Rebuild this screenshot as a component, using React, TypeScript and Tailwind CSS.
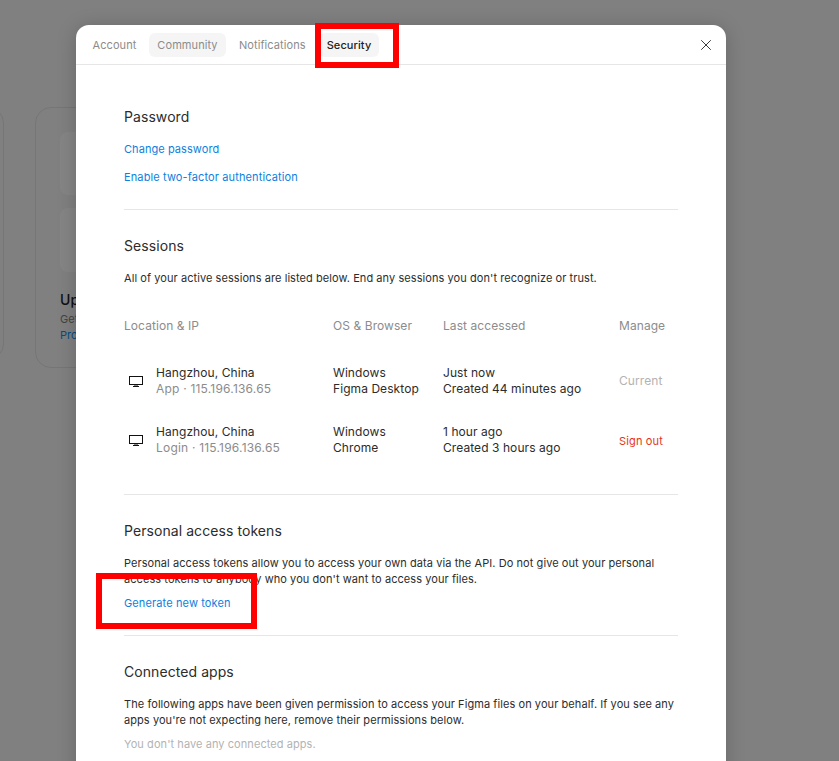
import { X } from "lucide-react"

const SESSIONS = [
    { place: "Hangzhou, China", via: "App · 115.196.136.65", os: "Windows", app: "Figma Desktop", last: "Just now", created: "Created 44 minutes ago", current: true },
    { place: "Hangzhou, China", via: "Login · 115.196.136.65", os: "Windows", app: "Chrome", last: "1 hour ago", created: "Created 3 hours ago", current: false },
]

function Monitor() {
    return (
        <svg width="16" height="14" viewBox="0 0 16 14" fill="none" stroke="#111" strokeWidth="1" className="shrink-0 mt-[2px]">
            <rect x="1.5" y="1.5" width="13" height="8" />
            <path d="M5 11.5h6M7 10v1M9 10v1" />
        </svg>
    )
}

function Background() {
    return (
        <div className="flex gap-[31px] pt-[107px] -ml-[200px]">
            <div className="w-[204px] h-[253px] shrink-0 rounded-2xl border border-[#767676]" />
            <div className="w-[400px] h-[261px] shrink-0 rounded-2xl border border-[#767676] px-6 pt-6">
                <div className="h-[63px] rounded-lg bg-[#858585]" />
                <div className="h-[64px] mt-[13px] rounded-lg bg-[#858585]" />
                <div className="mt-[18px] text-sm leading-5 font-medium text-[#111]">Upgrade</div>
                <div className="mt-px text-[11px] leading-4 text-[#444]">Get more</div>
                <div className="text-[11px] leading-4 text-[#0a4a80]">Professional</div>
            </div>
        </div>
    )
}

function Tab({ label, width, pill, active }: { label: string; width?: string; pill?: boolean; active?: boolean }) {
    return (
        <div className={`h-6 flex items-center justify-center px-2 rounded-md text-[11px] tracking-[0.08px] ${width ?? ""} ${pill ? "bg-[#f5f5f5]" : ""} ${active ? "text-[#222] font-medium" : "text-[#8c8c8c]"}`}>
            {label}
        </div>
    )
}

export default function App() {
    return (
        <div className="relative h-[761px] w-[839px] overflow-hidden bg-[#808080] font-['Inter',sans-serif] text-[#2c2c2c] tracking-[0.07px]">
            <Background />

            <div className="absolute left-[76px] top-[25px] w-[650px] h-[760px] rounded-t-[13px] bg-white shadow-[0_2px_20px_rgba(0,0,0,0.2)]">
                <div className="h-10 flex items-center justify-between pl-[9px] pr-[11px] border-b border-[#e6e6e6]">
                    <div className="flex items-center gap-[5px] pt-px">
                        <Tab label="Account" width="w-[59px]" />
                        <Tab label="Community" width="w-[77px]" pill />
                        <Tab label="Notifications" />
                        <Tab label="Security" pill active />
                    </div>
                    <X size={18} strokeWidth={1.1} className="text-[#111]" />
                </div>

                <div className="px-12">
                    <section className="pt-[42px] pb-6 border-b border-[#e6e6e6]">
                        <h2 className="text-[14px] leading-5">Password</h2>
                        <div className="mt-[14px] text-[11px] leading-4 text-[#0d7fe0]">Change password</div>
                        <div className="mt-3 text-[11px] leading-4 tracking-[0.12px] text-[#0d7fe0]">Enable two-factor authentication</div>
                    </section>

                    <section className="pt-[26px] pb-[38px] border-b border-[#e6e6e6]">
                        <h2 className="text-[14px] leading-5">Sessions</h2>
                        <p className="mt-[14px] text-[11px] leading-4">All of your active sessions are listed below. End any sessions you don't recognize or trust.</p>
                        <div className="mt-[32px] grid grid-cols-[209px_110px_176px_1fr] text-[12px] leading-4 text-[#8c8c8c]">
                            <div>Location &amp; IP</div>
                            <div>OS &amp; Browser</div>
                            <div>Last accessed</div>
                            <div>Manage</div>
                        </div>
                        <div className="mt-[31px] flex flex-col gap-[27px]">
                            {SESSIONS.map((s) => (
                                <div key={s.via} className="grid grid-cols-[209px_110px_176px_1fr] items-center text-[12px] leading-4">
                                    <div className="flex items-center gap-[12px] pl-[4px]">
                                        <Monitor />
                                        <div>
                                            <div>{s.place}</div>
                                            <div className="text-[#8c8c8c] tracking-[0.2px]">{s.via}</div>
                                        </div>
                                    </div>
                                    <div>
                                        <div>{s.os}</div>
                                        <div>{s.app}</div>
                                    </div>
                                    <div>
                                        <div>{s.last}</div>
                                        <div>{s.created}</div>
                                    </div>
                                    <div className={s.current ? "text-[12px] text-[#b3b3b3]" : "text-[11px] tracking-[0.15px] mt-px text-[#e5341a]"}>
                                        {s.current ? "Current" : "Sign out"}
                                    </div>
                                </div>
                            ))}
                        </div>
                    </section>

                    <section className="pt-[26px] pb-6 border-b border-[#e6e6e6]">
                        <h2 className="text-[14px] leading-5">Personal access tokens</h2>
                        <p className="mt-[14px] text-[11px] leading-4">Personal access tokens allow you to access your own data via the API. Do not give out your personal access tokens to anybody who you don't want to access your files.</p>
                        <div className="mt-2 text-[11px] leading-4 tracking-[0.12px] text-[#0d7fe0]">Generate new token</div>
                    </section>

                    <section className="pt-[26px]">
                        <h2 className="text-[14px] leading-5">Connected apps</h2>
                        <p className="mt-[14px] text-[11px] leading-4">The following apps have been given permission to access your Figma files on your behalf. If you see any apps you're not expecting here, remove their permissions below.</p>
                        <p className="mt-2 text-[11px] leading-4 text-[#b3b3b3]">You don't have any connected apps.</p>
                    </section>
                </div>
            </div>

            {/* red annotation boxes */}
            <div className="absolute left-[315px] top-[23px] w-[84px] h-[45px] border-[6px] border-[#ff0000]" />
            <div className="absolute left-[96px] top-[573px] w-[161px] h-[56px] border-[6px] border-[#ff0000]" />
        </div>
    )
}
